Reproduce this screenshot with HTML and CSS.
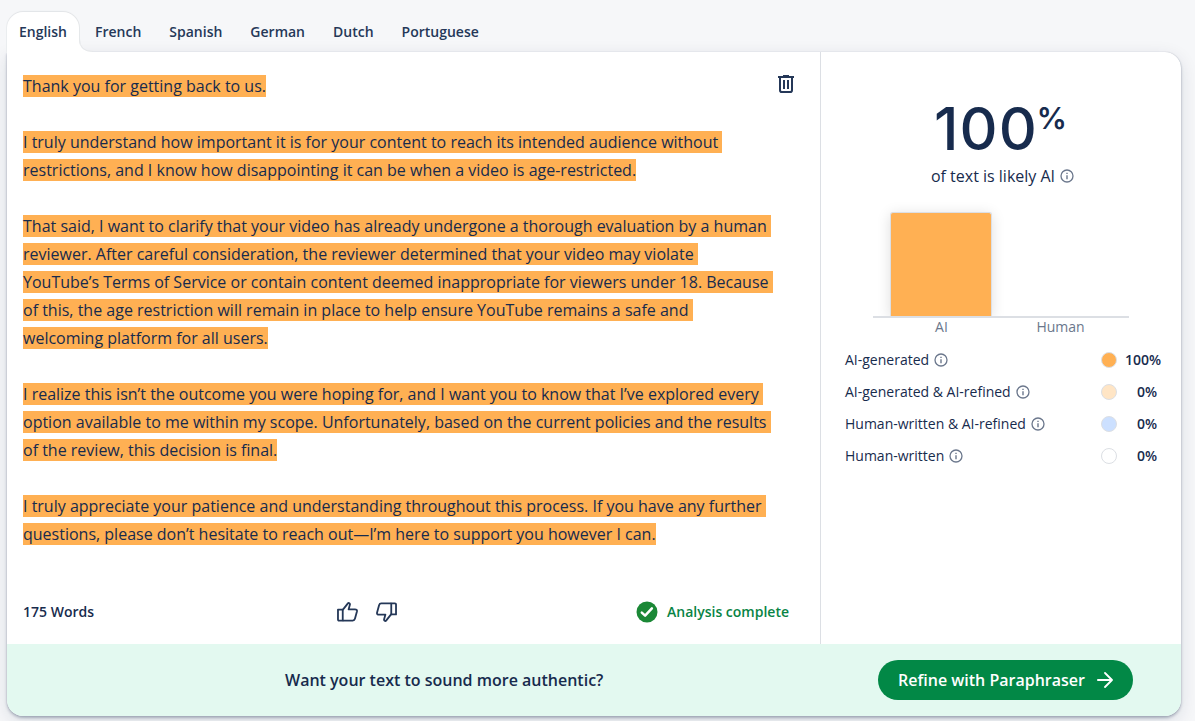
FILE: index.html
```html
<!DOCTYPE html>
<html lang="en">
<head>
<meta charset="utf-8">
<title>AI Detector</title>
<link rel="stylesheet" href="styles.css">
</head>
<body>
<svg class="defs" width="0" height="0"><symbol id="info" viewBox="0 0 14 14"><circle cx="7" cy="7" r="6" fill="none" stroke="currentColor" stroke-width="1.3"/><path d="M7 6.2v4" stroke="currentColor" stroke-width="1.4"/><path d="M7 3.7v1.4" stroke="currentColor" stroke-width="1.4"/></symbol></svg>
<nav class="tabs">
<a class="tab active">English<svg class="flare" width="14" height="14" viewBox="0 0 14 14"><path d="M0 0Q0 12.5 13 12.5V14H0Z" fill="#fff"/><path d="M.5 0Q.5 12.5 14 12.5" fill="none" stroke="#e6e8ea"/></svg></a>
<a class="tab">French</a>
<a class="tab">Spanish</a>
<a class="tab">German</a>
<a class="tab">Dutch</a>
<a class="tab">Portuguese</a>
</nav>
<main class="card">
<div class="panels">
<section class="editor">
<div class="text"><p><mark>Thank you for getting back to us.</mark></p>
<p><mark>I truly understand how important it is for your content to reach its intended audience without 
restrictions, and I know how disappointing it can be when a video is age-restricted.</mark></p>
<p><mark>That said, I want to clarify that your video has already undergone a thorough evaluation by a human 
reviewer. After careful consideration, the reviewer determined that your video may violate 
YouTube’s Terms of Service or contain content deemed inappropriate for viewers under 18. Because 
of this, the age restriction will remain in place to help ensure YouTube remains a safe and 
welcoming platform for all users.</mark></p>
<p><mark>I realize this isn’t the outcome you were hoping for, and I want you to know that I’ve explored every 
option available to me within my scope. Unfortunately, based on the current policies and the results 
of the review, this decision is final.</mark></p>
<p><mark>I truly appreciate your patience and understanding throughout this process. If you have any further 
questions, please don’t hesitate to reach out—I’m here to support you however I can.</mark></p></div>
<svg class="trash" width="16" height="18" viewBox="0 0 16 18" fill="none" stroke="#253858" stroke-width="2"><path d="M0 2h16"/><path d="M5 .8h6" stroke-width="1.6"/><path d="M2 2v13.2q0 1.8 1.8 1.8h8.4q1.8 0 1.8-1.8V2"/><path d="M6 5v9M10 5v9"/></svg>
<div class="status">
<span class="words">175 Words</span>
<div class="votes">
<svg width="21" height="20" viewBox="0 0 22 21" fill="none" stroke="#253858" stroke-width="1.9" stroke-linejoin="round"><path d="M1 8h5v11.5H2.2Q1 19.5 1 18.3Z"/><path d="M6 8.3L11.2 1.7Q12 .7 13 1.3Q13.8 1.8 13.5 3L12.2 7.7H18.8Q21.4 7.7 20.9 10L18.8 17.7Q18.3 19.5 16.5 19.5H6"/></svg>
<svg width="21" height="20" viewBox="0 0 22 21" fill="none" stroke="#253858" stroke-width="1.9" stroke-linejoin="round"><g transform="rotate(180 11 10.5)"><path d="M1 8h5v11.5H2.2Q1 19.5 1 18.3Z"/><path d="M6 8.3L11.2 1.7Q12 .7 13 1.3Q13.8 1.8 13.5 3L12.2 7.7H18.8Q21.4 7.7 20.9 10L18.8 17.7Q18.3 19.5 16.5 19.5H6"/></g></svg>
</div>
<div class="done"><svg width="22" height="22" viewBox="0 0 22 22"><circle cx="11" cy="11" r="10.5" fill="#1b8836"/><path d="M5.8 11.7l3.3 3 6.8-7.4" fill="none" stroke="#fff" stroke-width="2.5" stroke-linecap="round" stroke-linejoin="round"/></svg>Analysis complete</div>
</div>
</section>
<aside class="results">
<div class="score"><span class="num">100</span><span class="pct">%</span></div>
<div class="likely">of text is likely AI <svg class="info"><use href="#info"/></svg></div>
<div class="chart"><div class="bar"></div></div>
<div class="axis"><span>AI</span><span>Human</span></div>
<ul class="legend">
<li><span>AI-generated</span><svg class="info"><use href="#info"/></svg><i class="dot ai"></i><b>100%</b></li>
<li><span>AI-generated &amp; AI-refined</span><svg class="info"><use href="#info"/></svg><i class="dot ai-refined"></i><b class="zero">0%</b></li>
<li><span>Human-written &amp; AI-refined</span><svg class="info"><use href="#info"/></svg><i class="dot human-refined"></i><b class="zero">0%</b></li>
<li><span>Human-written</span><svg class="info"><use href="#info"/></svg><i class="dot"></i><b class="zero">0%</b></li>
</ul>
</aside>
</div>
<footer class="banner">
<span class="question">Want your text to sound more authentic?</span>
<a class="refine">Refine with Paraphraser<svg width="16" height="16" viewBox="0 0 16 16" fill="none" stroke="#fff" stroke-width="1.8" stroke-linecap="round" stroke-linejoin="round"><path d="M.9 8h14M8 1l7 7-7 7"/></svg></a>
</footer>
</main>
</body>
</html>
```
FILE: styles.css
```css
* { box-sizing: border-box; }
body { margin: 0; height: 721px; overflow: hidden; padding: 12px 14px 0 7px; background: #f6f7f9; color: #172b4d; font: 16px/28px "Open Sans", sans-serif; }
.defs { position: absolute; }
.tabs { display: flex; height: 40px; font-size: 14px; line-height: 40px; font-weight: 600; color: #253858; }
.tab { padding: 0 12px; margin-right: 4px; }
.tab.active { position: relative; z-index: 1; width: 72px; margin-right: 4px; height: 41px; background: #fff; border-radius: 16px 16px 0 0; box-shadow: 0 -1px 1px #e2e4e7, 1px 0 0 #e6e8ea, -1px 0 0 #eceef0; clip-path: inset(-4px -14px 0 -4px); }
.flare { position: absolute; left: 72px; bottom: 0; }
.card { height: 664px; display: flex; flex-direction: column; border-radius: 0 16px 16px 16px; background: #fff; box-shadow: 0 0 1px rgba(9,30,66,.3), 0 2px 3px rgba(9,30,66,.28), 0 5px 18px rgba(9,30,66,.12); }
.panels { display: flex; height: 592px; }
.editor { position: relative; width: 814px; border-right: 1px solid #dcdfe4; padding: 20px 16px 0; display: flex; flex-direction: column; }
.text { display: flex; flex-direction: column; gap: 28px; height: 515px; }
.text p { margin: 0; white-space: pre; }
mark { background: #ffb053; color: inherit; }
.trash { position: absolute; left: 771px; top: 23px; }
.status { display: grid; grid-template-columns: 314px 1fr auto; align-items: center; height: 50px; font-size: 14px; font-weight: 600; padding-right: 15px; }
.votes { display: flex; gap: 18px; }
.done { display: flex; align-items: center; gap: 9px; color: #098445; }
.results { width: 360px; padding: 43px 20px 0 24px; }
.score { display: flex; justify-content: center; align-items: flex-start; height: 65px; padding-right: 5px; font-family: Inter, sans-serif; font-weight: 500; }
.num { font-size: 59px; line-height: 67px; letter-spacing: 1px; }
.pct { margin-left: -1px; font-size: 30px; line-height: 47px; font-weight: 600; }
.likely { display: flex; align-items: center; justify-content: center; gap: 5px; height: 32px; padding-right: 1px; }
.info { width: 14px; height: 14px; color: #6b778c; flex: none; }
.chart { width: 256px; height: 126px; margin: 0 0 0 28px; padding: 20px 0 0 17px; border-bottom: 2px solid #dcdfe4; }
.bar { width: 102px; height: 104px; background: #ffb053; border: 1px solid #dcdfe4; border-bottom: 0; border-radius: 3px 3px 0 0; box-shadow: 0 2px 14px rgba(0,0,0,.13); clip-path: inset(-18px -18px 0); }
.axis { display: flex; margin-left: 37px; font-size: 14px; line-height: 17px; color: #6b778c; }
.axis span { width: 119px; text-align: center; }
.legend { list-style: none; margin: 9px -8px 0 0; padding: 0; font-size: 14px; }
.legend li { display: flex; align-items: center; height: 32px; }
.legend .info { margin-left: 5px; }
.dot { width: 16px; height: 16px; border: 1px solid #dcdfe4; border-radius: 50%; margin-left: auto; }
.ai { background: #ffb053; }
.ai-refined { background: #ffe5c5; }
.human-refined { background: #cce0ff; }
.legend b { width: 52px; text-align: center; font-weight: 600; }
.legend .zero { padding-left: 8px; }
.banner { flex: 1; display: flex; align-items: center; justify-content: space-between; padding: 0 48px 0 278px; background: #e3f9f0; border-radius: 0 0 16px 16px; font-weight: 600; }
.refine { display: flex; align-items: center; justify-content: center; gap: 12px; width: 255px; height: 40px; border-radius: 20px; background: #028846; color: #fff; }
```
